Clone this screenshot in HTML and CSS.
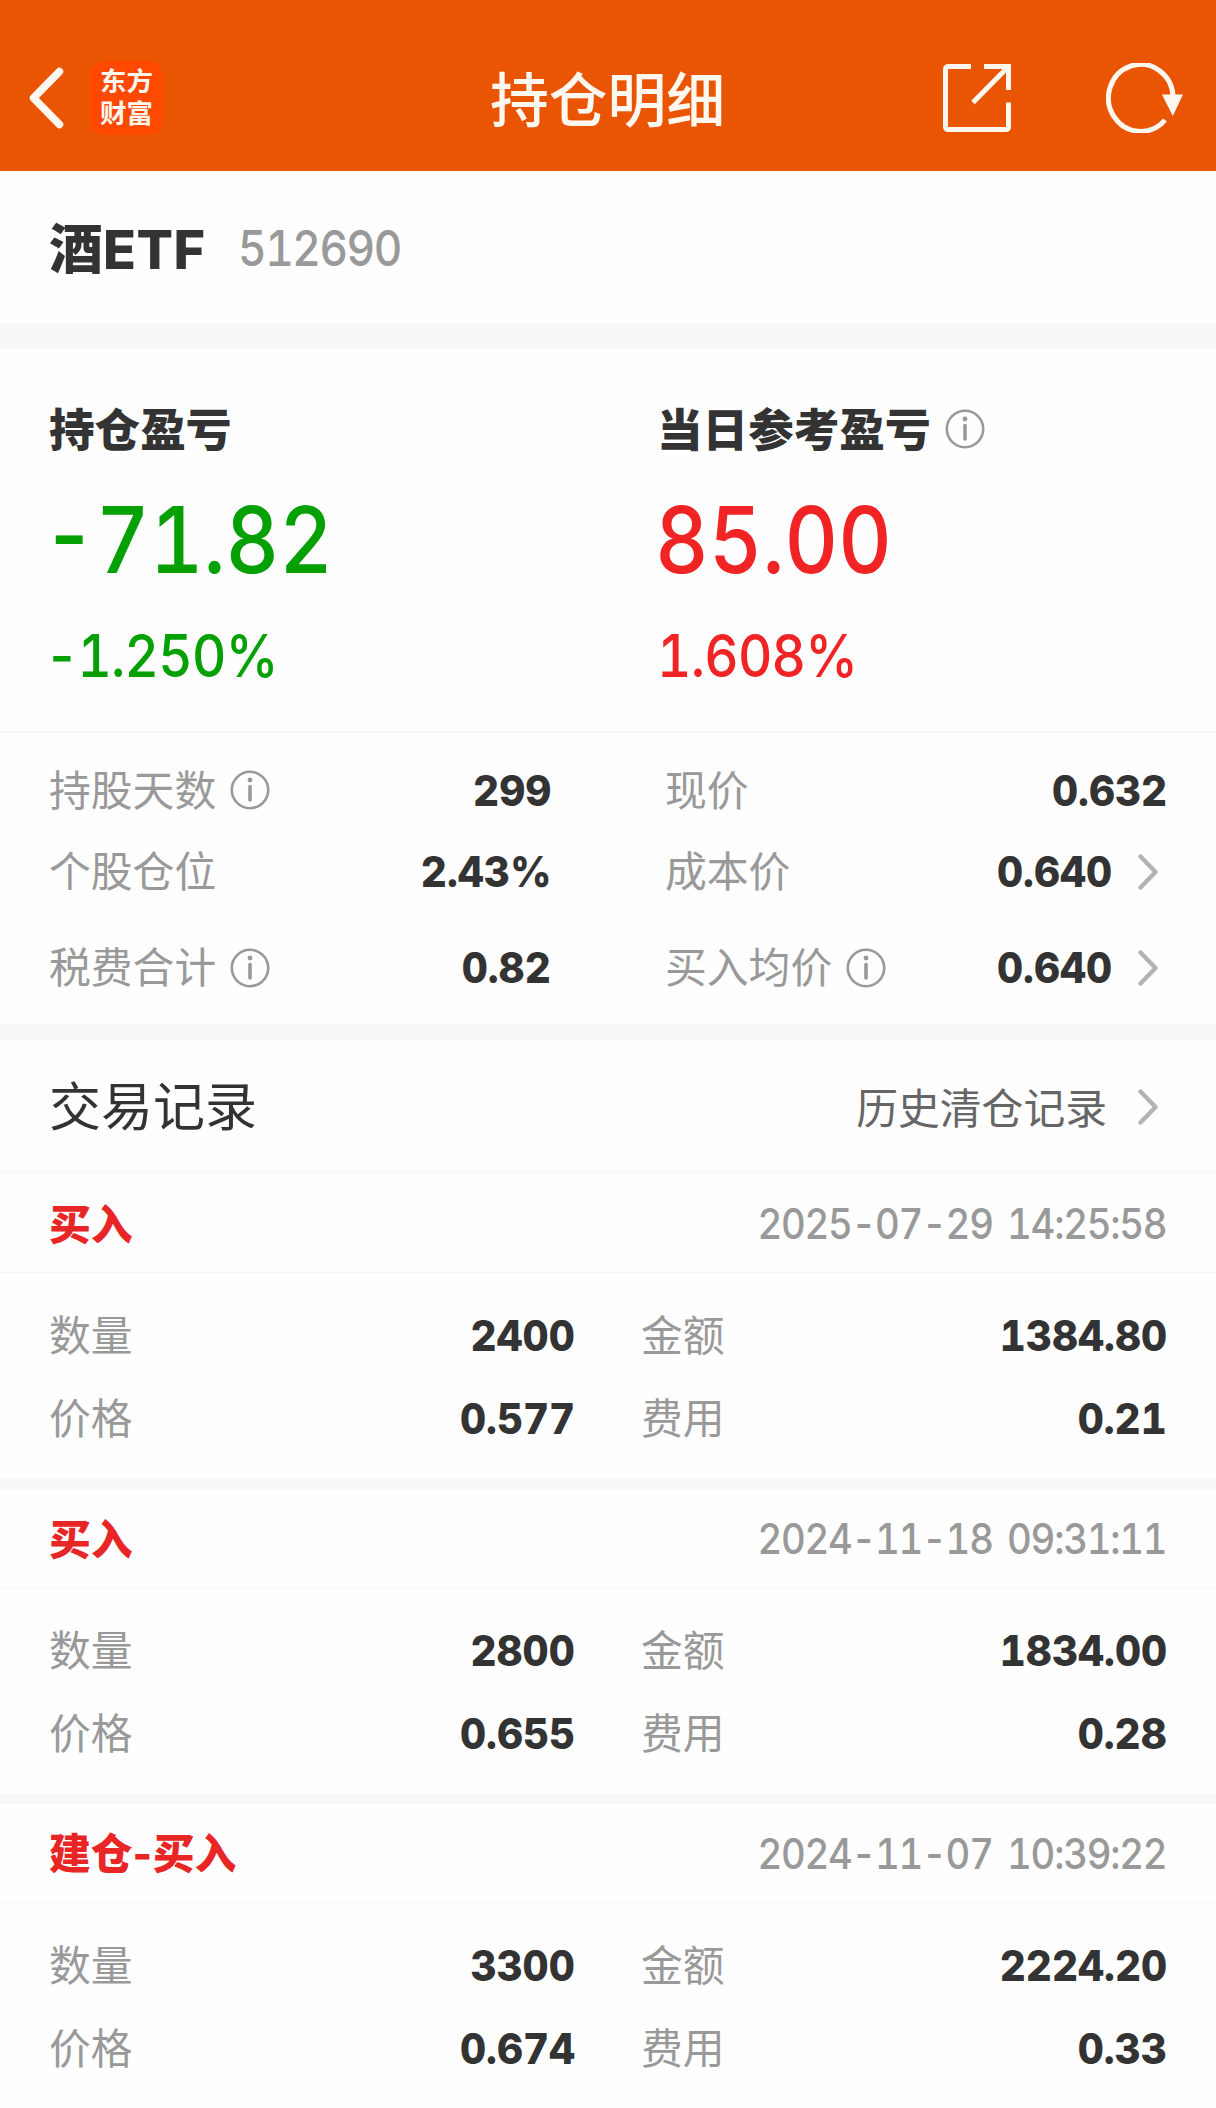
FILE: index.html
```html
<!DOCTYPE html>
<html lang="zh-CN">
<head>
<meta charset="utf-8">
<title>持仓明细</title>
<link rel="stylesheet" href="styles.css">
</head>
<body>
<svg class="defs" width="0" height="0" aria-hidden="true">
  <symbol id="info" viewBox="0 0 40 40">
    <circle cx="20" cy="20" r="18.2" fill="none" stroke="currentColor" stroke-width="2.6"/>
    <circle cx="20" cy="10" r="2.4" fill="currentColor"/>
    <path d="M20 16.5V30" fill="none" stroke="currentColor" stroke-width="3.6" stroke-linecap="round"/>
  </symbol>
  <symbol id="chevron" viewBox="0 0 20 36">
    <path d="M2.5 2.5L17.5 18L2.5 33.5" fill="none" stroke="currentColor" stroke-width="4.4" stroke-linecap="round" stroke-linejoin="round"/>
  </symbol>
</svg>

<header class="topbar">
  <div class="topbar-side">
    <svg class="back" viewBox="0 0 36 62"><path d="M31.500 4.500L5.500 31L31.500 57.500" fill="none" stroke="#fff8f0" stroke-width="7.500" stroke-linecap="round" stroke-linejoin="round"/></svg>
    <div class="logo"><span>东方</span><span>财富</span></div>
  </div>
  <h1 class="topbar-title">持仓明细</h1>
  <div class="topbar-side topbar-actions">
    <svg class="share" viewBox="0 0 68 68" fill="none" stroke="#fff8f0" stroke-width="5">
      <path d="M28 2.500H5.500Q2.500 2.500 2.500 5.500V62.500Q2.500 65.500 5.500 65.500H62.500Q65.500 65.500 65.500 62.500V38.500"/>
      <path d="M41 2.500H65.500V26M64.500 3.500L30 38.500"/>
    </svg>
    <svg class="reload" viewBox="0 0 78 70">
      <path d="M67 33A32.300 33.500 0 1 0 59 57" fill="none" stroke="#fff8f0" stroke-width="5"/>
      <path d="M56 31.500H77L66.800 53Z" fill="#fff8f0"/>
    </svg>
  </div>
</header>

<section class="security">
  <span class="security-name">酒<span class="latin">ETF</span></span>
  <span class="security-code">512690</span>
</section>

<section class="profit">
  <div class="profit-col">
    <h2><span>持仓盈亏</span></h2>
    <p class="amount down"><span class="sign">-</span>71.82</p>
    <p class="rate down"><span class="sign">-</span>1.250%</p>
  </div>
  <div class="profit-col">
    <h2><span>当日参考盈亏</span><svg class="info"><use href="#info"/></svg></h2>
    <p class="amount up">85.00</p>
    <p class="rate up">1.608%</p>
  </div>
</section>

<section class="facts">
  <div class="fact-row">
    <div class="fact"><span class="label"><span>持股天数</span><svg class="info"><use href="#info"/></svg></span><b>299</b></div>
    <div class="fact"><span class="label"><span>现价</span></span><b>0.632</b></div>
  </div>
  <div class="fact-row">
    <div class="fact"><span class="label"><span>个股仓位</span></span><b>2.43%</b></div>
    <div class="fact"><span class="label"><span>成本价</span></span><b>0.640</b><svg class="chevron"><use href="#chevron"/></svg></div>
  </div>
  <div class="fact-row fact-row-tall">
    <div class="fact"><span class="label"><span>税费合计</span><svg class="info"><use href="#info"/></svg></span><b>0.82</b></div>
    <div class="fact"><span class="label"><span>买入均价</span><svg class="info"><use href="#info"/></svg></span><b>0.640</b><svg class="chevron"><use href="#chevron"/></svg></div>
  </div>
</section>

<section class="records">
  <div class="records-head">
    <h2>交易记录</h2>
    <a class="history">历史清仓记录<svg class="chevron"><use href="#chevron"/></svg></a>
  </div>

  <article class="trade">
    <div class="trade-head"><span class="side">买入</span><time>2025-07-29 14:25:58</time></div>
    <div class="trade-body">
      <div class="cell"><span class="label"><span>数量</span></span><b>2400</b></div>
      <div class="cell"><span class="label"><span>金额</span></span><b>1384.80</b></div>
      <div class="cell"><span class="label"><span>价格</span></span><b>0.577</b></div>
      <div class="cell"><span class="label"><span>费用</span></span><b>0.21</b></div>
    </div>
  </article>

  <article class="trade">
    <div class="trade-head"><span class="side">买入</span><time>2024-11-18 09:31:11</time></div>
    <div class="trade-body">
      <div class="cell"><span class="label"><span>数量</span></span><b>2800</b></div>
      <div class="cell"><span class="label"><span>金额</span></span><b>1834.00</b></div>
      <div class="cell"><span class="label"><span>价格</span></span><b>0.655</b></div>
      <div class="cell"><span class="label"><span>费用</span></span><b>0.28</b></div>
    </div>
  </article>

  <article class="trade">
    <div class="trade-head"><span class="side">建仓<span class="latin">-</span>买入</span><time>2024-11-07 10:39:22</time></div>
    <div class="trade-body">
      <div class="cell"><span class="label"><span>数量</span></span><b>3300</b></div>
      <div class="cell"><span class="label"><span>金额</span></span><b>2224.20</b></div>
      <div class="cell"><span class="label"><span>价格</span></span><b>0.674</b></div>
      <div class="cell"><span class="label"><span>费用</span></span><b>0.33</b></div>
    </div>
  </article>
</section>
</body>
</html>
```
FILE: styles.css
```css
* {
  box-sizing: border-box;
  margin: 0;
  padding: 0;
}

html {
  overflow: hidden;
}

body {
  width: 1216px;
  height: 2108px;
  overflow: hidden;
  background: #fefefe;
  color: #333;
  font-family: "Noto Sans CJK SC", sans-serif;
  font-size: 41.8px;
  line-height: 1;
  white-space: nowrap;
}

svg {
  display: block;
  flex: none;
}

.defs {
  position: absolute;
}

/* Top bar */
.topbar {
  display: flex;
  align-items: center;
  justify-content: space-between;
  height: 171px;
  padding: 25px 32px 0 28px;
  background: #ea5504;
  color: #fff8f0;
}

.topbar-side {
  display: flex;
  align-items: center;
  width: 250px;
}

.topbar-actions {
  justify-content: flex-end;
  gap: 95px;
}

.back {
  width: 36px;
  height: 62px;
  margin-right: 26px;
}

.logo {
  display: flex;
  flex-direction: column;
  align-items: center;
  justify-content: center;
  width: 73px;
  height: 74px;
  padding-bottom: 4px;
  border-radius: 15px;
  background: #ff4800;
  font-size: 26.5px;
  font-weight: 700;
  line-height: 32px;
}

.topbar-title {
  padding: 0 0 3px 3px;
  font-size: 58.8px;
  font-weight: 500;
  line-height: 76px;
}

.share {
  width: 68px;
  height: 68px;
}

.reload {
  width: 78px;
  height: 70px;
}

/* Security name */
.security {
  display: flex;
  align-items: center;
  height: 178px;
  padding: 0 49px;
  border-bottom: 26px solid #f6f8fa;
}

.security-name {
  padding-top: 1px;
  font-size: 54px;
  font-weight: 900;
}

.latin {
  font-family: Inter, sans-serif;
  font-weight: 800;
  letter-spacing: 0.5px;
}

/* Figures are set slightly condensed */
.security-code,
.amount,
.rate,
time {
  font-family: Inter, sans-serif;
  font-variant-numeric: tabular-nums;
  transform: scaleX(0.9);
  transform-origin: left center;
}

.security-code {
  margin: 2px 0 0 32px;
  color: #999;
  font-size: 49px;
  font-weight: 450;
  letter-spacing: -1.6px;
}

/* Profit */
.profit {
  display: flex;
  height: 384px;
  padding: 54px 49px 0;
  border-bottom: 2px solid #f8f8f8;
}

.profit-col {
  flex: none;
  width: 608px;
}

.profit h2 {
  display: flex;
  align-items: center;
  height: 52px;
  font-size: 45.6px;
  font-weight: 900;
}

.profit h2 span {
  padding-bottom: 2px;
}

.label span {
  padding-bottom: 4px;
}

.amount,
.rate {
  font-weight: 500;
}

.amount {
  margin-top: 39px;
  font-size: 92px;
  line-height: 92px;
}

.amount.up {
  margin-left: -2px;
}

.rate {
  margin-top: 40px;
  font-size: 59px;
  line-height: 60px;
  letter-spacing: -0.8px;
}

.sign {
  margin: 0 0 0 -0.08em;
}

.rate .sign {
  margin-right: -0.02em;
}

.up {
  color: #f02424;
}

.down {
  color: #04a004;
}

.info {
  width: 40px;
  height: 40px;
  margin-left: 14px;
  color: #999;
}

.chevron {
  width: 20px;
  height: 36px;
  margin-left: 27px;
  margin-right: 8px;
  color: #b3b3b3;
}

.label {
  display: flex;
  align-items: center;
  margin-right: auto;
  color: #999;
}

b {
  margin-right: -1px;
  padding-top: 1px;
  font-family: Inter, sans-serif;
  font-size: 42.5px;
  font-weight: 800;
  font-variant-numeric: tabular-nums;
  transform: scaleX(0.95);
  transform-origin: right center;
}

/* Holding facts */
.facts {
  height: 307px;
  padding: 17px 50px 0 49px;
  border-bottom: 16px solid #f6f8fa;
}

.fact-row {
  display: grid;
  grid-template-columns: 501px 501px;
  justify-content: space-between;
}

.fact {
  display: flex;
  align-items: center;
  height: 81px;
}

.fact-row-tall .fact {
  height: 112px;
}

/* Trade records */
.records-head {
  display: flex;
  align-items: center;
  justify-content: space-between;
  height: 134px;
  padding: 4px 50px 0 49px;
  border-bottom: 4px solid #f6f8fa;
}

.records-head h2 {
  padding-bottom: 7px;
  font-size: 52px;
  font-weight: 400;
}

.history {
  display: flex;
  align-items: center;
  color: #666;
}

.history .chevron {
  margin-left: 31px;
}

.trade {
  height: 315px;
  border-bottom: 10px solid #f6f8fa;
}

.trade-head {
  display: flex;
  align-items: center;
  justify-content: space-between;
  height: 99px;
  padding: 0 50px 0 49px;
  border-bottom: 1px solid #f5f6f8;
}

.side {
  color: #e82626;
  font-weight: 900;
}

time {
  padding-top: 2px;
  color: #999;
  font-size: 42.5px;
  font-weight: 450;
  letter-spacing: -1.4px;
  word-spacing: 6px;
  transform-origin: right center;
}

.trade-body {
  display: grid;
  grid-template-columns: 525px 525px;
  justify-content: space-between;
  padding: 21px 50px 0 49px;
}

.cell {
  display: flex;
  align-items: center;
  height: 83px;
}
```
